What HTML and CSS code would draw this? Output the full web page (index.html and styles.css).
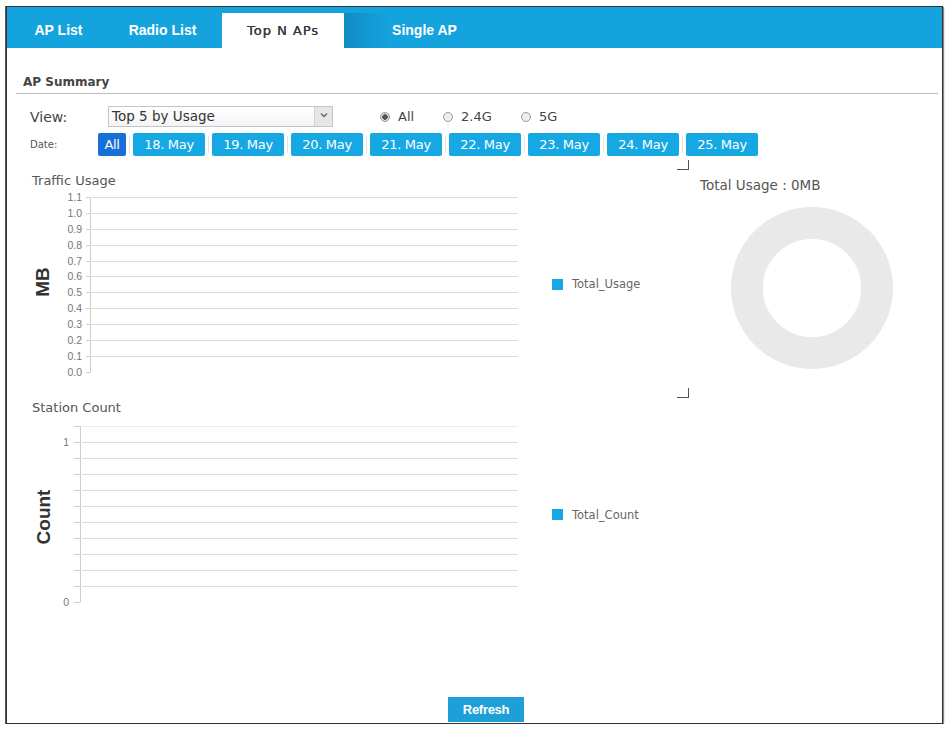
FILE: index.html
```html
<!DOCTYPE html>
<html>
<head>
<meta charset="utf-8">
<link rel="stylesheet" href="styles.css">
</head>
<body>
<div class="frame">
  <div class="tabs">
    <div class="tab t1">AP List</div>
    <div class="tab t2">Radio List</div>
    <div class="tab active">Top N APs</div>
    <div class="tab t4">Single AP</div>
  </div>

  <div class="summary">AP Summary</div>

  <div class="view-row">
    <span class="view-label">View:</span>
    <div class="select"><span class="select-text">Top 5 by Usage</span><span class="select-arrow"><svg width="8" height="6" viewBox="0 0 8 6"><path d="M1 1.5 L4 4.5 L7 1.5" fill="none" stroke="#666" stroke-width="1.4"/></svg></span></div>
    <div class="radios">
      <label class="radio r-all"><span class="dot checked"></span>All</label>
      <label class="radio r-24"><span class="dot"></span>2.4G</label>
      <label class="radio"><span class="dot"></span>5G</label>
    </div>
  </div>

  <div class="date-row">
    <span class="date-label">Date:</span>
    <span class="date-btn all">All</span>
    <span class="date-btn">18. May</span>
    <span class="date-btn">19. May</span>
    <span class="date-btn">20. May</span>
    <span class="date-btn">21. May</span>
    <span class="date-btn">22. May</span>
    <span class="date-btn">23. May</span>
    <span class="date-btn">24. May</span>
    <span class="date-btn">25. May</span>
  </div>

  <div class="charts">
    <div class="left-col">
      <div class="panel traffic">
        <span class="corner c1"></span>
        <span class="corner c2"></span>
        <div class="chart-title">Traffic Usage</div>
        <svg class="chart" width="683" height="211" viewBox="0 0 683 211">
          <g class="grid">
            <line x1="85" y1="8.5" x2="511" y2="8.5"/>
            <line x1="85" y1="24.5" x2="511" y2="24.5"/>
            <line x1="85" y1="40.5" x2="511" y2="40.5"/>
            <line x1="85" y1="56.5" x2="511" y2="56.5"/>
            <line x1="85" y1="72.5" x2="511" y2="72.5"/>
            <line x1="85" y1="87.5" x2="511" y2="87.5"/>
            <line x1="85" y1="103.5" x2="511" y2="103.5"/>
            <line x1="85" y1="119.5" x2="511" y2="119.5"/>
            <line x1="85" y1="135.5" x2="511" y2="135.5"/>
            <line x1="85" y1="151.5" x2="511" y2="151.5"/>
            <line x1="85" y1="167.5" x2="511" y2="167.5"/>
          </g>
          <g class="axis">
            <line x1="83.5" y1="8" x2="83.5" y2="183.5"/>
            <line x1="79" y1="8.5" x2="83" y2="8.5"/>
            <line x1="79" y1="24.5" x2="83" y2="24.5"/>
            <line x1="79" y1="40.5" x2="83" y2="40.5"/>
            <line x1="79" y1="56.5" x2="83" y2="56.5"/>
            <line x1="79" y1="72.5" x2="83" y2="72.5"/>
            <line x1="79" y1="87.5" x2="83" y2="87.5"/>
            <line x1="79" y1="103.5" x2="83" y2="103.5"/>
            <line x1="79" y1="119.5" x2="83" y2="119.5"/>
            <line x1="79" y1="135.5" x2="83" y2="135.5"/>
            <line x1="79" y1="151.5" x2="83" y2="151.5"/>
            <line x1="79" y1="167.5" x2="83" y2="167.5"/>
            <line x1="79" y1="183.5" x2="83" y2="183.5"/>
          </g>
          <g class="ylabels">
            <text x="75" y="12">1.1</text>
            <text x="75" y="28">1.0</text>
            <text x="75" y="44">0.9</text>
            <text x="75" y="60">0.8</text>
            <text x="75" y="76">0.7</text>
            <text x="75" y="91">0.6</text>
            <text x="75" y="107">0.5</text>
            <text x="75" y="123">0.4</text>
            <text x="75" y="139">0.3</text>
            <text x="75" y="155">0.2</text>
            <text x="75" y="171">0.1</text>
            <text x="75" y="187">0.0</text>
          </g>
          <text class="axis-title" x="35" y="93" transform="rotate(-90 35 93)">MB</text>
          <rect class="legend-box" x="545" y="90" width="11" height="11"/>
          <text class="legend-text" x="565" y="99">Total_Usage</text>
        </svg>
      </div>
      <div class="panel station">
        <div class="chart-title">Station Count</div>
        <svg class="chart" width="683" height="195" viewBox="0 0 683 195">
          <g class="grid">
            <line class="faint" x1="75" y1="10.5" x2="511" y2="10.5"/>
            <line x1="75" y1="26.5" x2="511" y2="26.5"/>
            <line x1="75" y1="42.5" x2="511" y2="42.5"/>
            <line x1="75" y1="58.5" x2="511" y2="58.5"/>
            <line x1="75" y1="74.5" x2="511" y2="74.5"/>
            <line x1="75" y1="90.5" x2="511" y2="90.5"/>
            <line x1="75" y1="106.5" x2="511" y2="106.5"/>
            <line x1="75" y1="122.5" x2="511" y2="122.5"/>
            <line x1="75" y1="138.5" x2="511" y2="138.5"/>
            <line x1="75" y1="154.5" x2="511" y2="154.5"/>
            <line x1="75" y1="170.5" x2="511" y2="170.5"/>
          </g>
          <g class="axis">
            <line x1="73.5" y1="10" x2="73.5" y2="186.5"/>
            <line x1="67" y1="10.5" x2="73" y2="10.5"/>
            <line x1="67" y1="26.5" x2="73" y2="26.5"/>
            <line x1="67" y1="42.5" x2="73" y2="42.5"/>
            <line x1="67" y1="58.5" x2="73" y2="58.5"/>
            <line x1="67" y1="74.5" x2="73" y2="74.5"/>
            <line x1="67" y1="90.5" x2="73" y2="90.5"/>
            <line x1="67" y1="106.5" x2="73" y2="106.5"/>
            <line x1="67" y1="122.5" x2="73" y2="122.5"/>
            <line x1="67" y1="138.5" x2="73" y2="138.5"/>
            <line x1="67" y1="154.5" x2="73" y2="154.5"/>
            <line x1="67" y1="170.5" x2="73" y2="170.5"/>
            <line x1="67" y1="186.5" x2="73" y2="186.5"/>
          </g>
          <g class="ylabels">
            <text x="62" y="30">1</text>
            <text x="62" y="190">0</text>
          </g>
          <text class="axis-title" x="36" y="101" transform="rotate(-90 36 101)">Count</text>
          <rect class="legend-box" x="545" y="93" width="11" height="11"/>
          <text class="legend-text" x="565" y="103">Total_Count</text>
        </svg>
      </div>
    </div>
    <div class="right-col">
      <div class="total-title">Total Usage : 0MB</div>
      <svg class="donut" width="252" height="190" viewBox="0 0 252 190">
        <circle cx="122" cy="94" r="65" fill="none" stroke="#e9e9e9" stroke-width="32"/>
      </svg>
    </div>
  </div>

  <div class="footer">
    <span class="refresh">Refresh</span>
  </div>
</div>
</body>
</html>
```

FILE: styles.css
```css
* { box-sizing: border-box; }
body {
  margin: 0;
  background: #fff;
  font-family: "DejaVu Sans", sans-serif;
}
.frame {
  margin: 6px 0 0 6px;
  width: 937px;
  height: 718px;
  border: 1px solid #333;
  box-shadow: -1px 0 0 #555, 1px 1px 1px #888;
  display: flex;
  flex-direction: column;
  background: #fff;
}
.tabs {
  height: 41px;
  background: #15a3dd;
  display: flex;
  align-items: flex-end;
}
.tab {
  height: 35px;
  line-height: 35px;
  text-align: center;
  color: #fff;
  font-family: "Liberation Sans", Arial, sans-serif;
  font-weight: bold;
  font-size: 14px;
}
.t1 { width: 103px; }
.t2 { width: 105px; margin-right: 7px; }
.active {
  width: 122px;
  background: #fff;
  color: #3a3a3a;
  font-family: "DejaVu Sans", sans-serif;
  font-weight: normal;
  font-size: 13px;
  letter-spacing: 1px;
  text-shadow: 0.3px 0 0 #3a3a3a;
}
.t4 {
  width: 161px;
  background: linear-gradient(90deg, #0f8cc2 0px, #15a3dd 45px);
}
.summary {
  margin: 27px 4px 0 9px;
  padding: 0 0 4px 7px;
  line-height: 14px;
  font-size: 12px;
  font-weight: bold;
  color: #444;
  border-bottom: 1px solid #bdbdbd;
}
.view-row {
  margin-top: 12px;
  padding-left: 23px;
  height: 21px;
  display: flex;
  align-items: center;
}
.view-label {
  width: 78px;
  font-size: 14px;
  color: #444;
}
.select {
  width: 225px;
  height: 21px;
  border: 1px solid #c4c4c4;
  display: flex;
  background: linear-gradient(#fff, #f4f4f4);
}
.select-text {
  flex: 1;
  padding-left: 3px;
  font-size: 13.5px;
  line-height: 19px;
  color: #333;
}
.select-arrow {
  width: 18px;
  background: #e6e6e6;
  border-left: 1px solid #d0d0d0;
  display: flex;
  align-items: flex-start;
  justify-content: center;
  padding-top: 5px;
}
.radios {
  margin-left: 47px;
  display: flex;
  align-items: center;
}
.radio {
  display: flex;
  align-items: center;
  font-size: 13px;
  color: #444;
}
.r-all { width: 63px; }
.r-24 { width: 78px; }
.dot {
  width: 10px;
  height: 10px;
  border-radius: 50%;
  border: 1px solid #999;
  background: #eee;
  margin-right: 8px;
  display: inline-block;
}
.dot.checked {
  background: radial-gradient(circle, #555 0 2.5px, #ddd 3px);
}
.date-row {
  margin-top: 6px;
  padding-left: 23px;
  height: 23px;
  display: flex;
  align-items: center;
  gap: 7px;
}
.date-label {
  width: 61px;
  font-size: 10px;
  color: #555;
}
.date-btn {
  position: relative;
  width: 72px;
  height: 23px;
  line-height: 23px;
  text-align: center;
  background: #16a8e3;
  color: #fff;
  font-size: 13px;
  border-radius: 2px;
  letter-spacing: -0.3px;
}
.date-btn.all {
  width: 28px;
  background: #1670d8;
}
.date-btn + .date-btn::before {
  content: "";
  position: absolute;
  left: -4px;
  top: 3px;
  bottom: 3px;
  width: 1px;
  background: #e2e2e2;
}
.charts {
  margin-top: 4px;
  display: grid;
  grid-template-columns: 683px 1fr;
}
.panel {
  position: relative;
}
.traffic {
  height: 240px;
  padding-top: 13px;
}
.corner {
  position: absolute;
  left: 670px;
  width: 12px;
  height: 10px;
  border-right: 1px solid #555;
  border-bottom: 1px solid #555;
}
.c1 { top: 0; }
.c2 { top: 228px; }
.chart-title {
  padding-left: 25px;
  line-height: 16px;
  font-size: 13px;
  color: #555;
}
.chart { display: block; }
.grid line { stroke: #dcdcdc; stroke-width: 1; }
.grid line.faint { stroke: #ececec; }
.axis line { stroke: #cfcfcf; stroke-width: 1; }
.ylabels text {
  font-family: "Liberation Sans", Arial, sans-serif;
  font-size: 10.5px;
  fill: #777;
  text-anchor: end;
}
.axis-title {
  font-family: "Liberation Sans", Arial, sans-serif;
  font-weight: bold;
  font-size: 19px;
  fill: #333;
  text-anchor: middle;
  dominant-baseline: central;
}
.legend-box { fill: #17a7e2; }
.legend-text {
  font-family: "DejaVu Sans", sans-serif;
  font-size: 11.5px;
  fill: #666;
}
.right-col {
  padding-top: 16px;
}
.total-title {
  padding-left: 10px;
  line-height: 18px;
  font-size: 13.5px;
  color: #555;
}
.donut { display: block; }
.footer {
  margin-top: auto;
  padding-left: 441px;
  padding-bottom: 1px;
}
.refresh {
  display: block;
  width: 76px;
  height: 25px;
  line-height: 25px;
  text-align: center;
  background: #1e9fd8;
  color: #fff;
  font-family: "Liberation Sans", Arial, sans-serif;
  font-weight: bold;
  font-size: 13px;
  letter-spacing: -0.3px;
}
```
